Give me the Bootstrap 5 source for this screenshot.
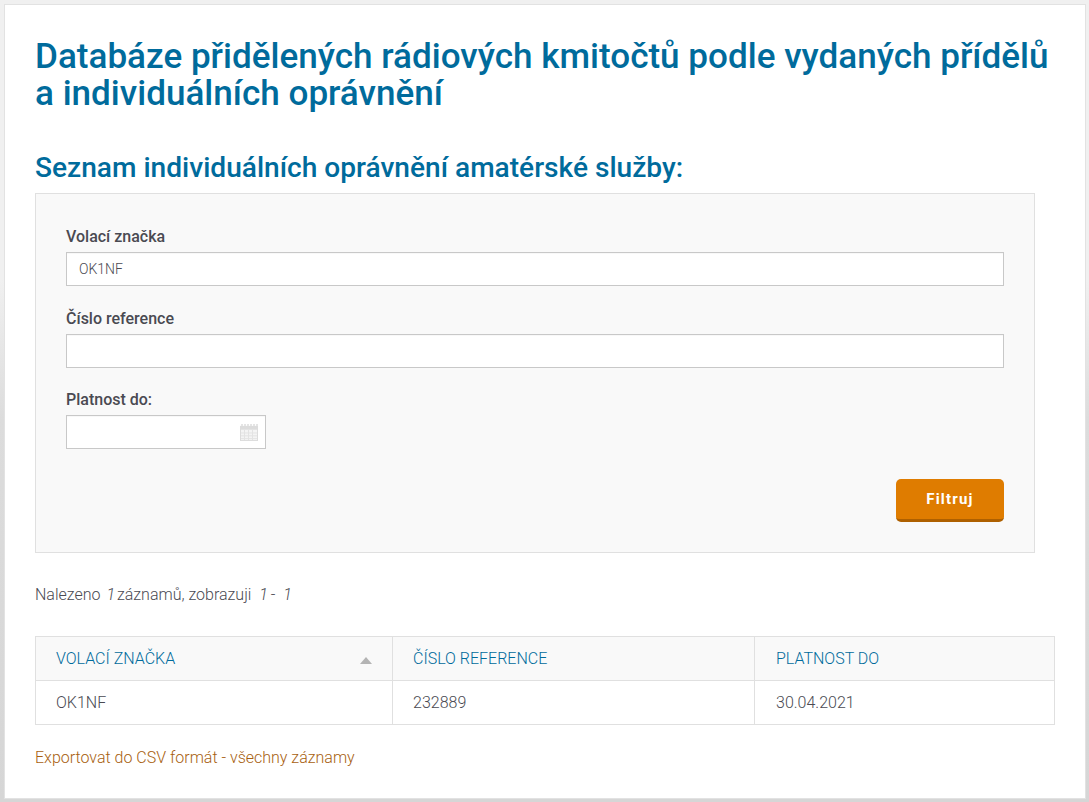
<!DOCTYPE html>
<html lang="cs">
<head>
    <meta charset="UTF-8">
    <meta name="viewport" content="width=device-width, initial-scale=1.0">
    <title>Seznam individuálních oprávnění</title>
    <link href="https://cdn.jsdelivr.net/npm/bootstrap@5.3.0/dist/css/bootstrap.min.css" rel="stylesheet">
    <style>
        html, body {
            height: 802px;
            overflow: hidden;
        }

        body {
            font-family: Roboto, "Liberation Sans", sans-serif;
            font-weight: 300;
            font-size: 16px;
            color: #4a4a52;
            background: linear-gradient(#f0f0f0 0, #f0f0f0 280px, #dcdcdc 420px, #d6d6d6 802px);
            padding: 4px 3px 3px 4px;
        }

        .panel-main {
            background-color: #ffffff;
            border: 1px solid #e2e2e2;
            height: 795px;
            padding: 33px 30px 0 30px;
        }

        .title-main {
            color: #006b9c;
            font-size: 35.1px;
            font-weight: 500;
            line-height: 37px;
            margin: 0 0 40px 0;
        }

        .title-sub {
            color: #006b9c;
            font-size: 28.1px;
            font-weight: 500;
            line-height: 32px;
            margin: 0 0 9px 0;
        }

        .filter-box {
            width: 1000px;
            height: 360px;
            background-color: #f9f9f9;
            border: 1px solid #e0e0e0;
            padding: 31px 30px 30px 30px;
        }

        .filter-label {
            display: block;
            font-size: 16px;
            font-weight: 500;
            line-height: 24px;
            color: #4a4a52;
            margin: 0 0 3px 0;
        }

        .filter-input {
            height: 34px;
            border: 1px solid #c8c8c8;
            border-radius: 0;
            font-size: 14px;
            font-weight: 300;
            color: #4a4a52;
            padding: 0 12px;
            margin-bottom: 21px;
            box-shadow: inset 0 1px 1px rgba(0, 0, 0, 0.03);
        }

        .filter-input-tight {
            margin-bottom: 20px;
        }

        .date-wrap {
            width: 200px;
        }

        .date-icon {
            position: absolute;
            right: 8px;
            top: 9px;
        }

        .btn-filter {
            width: 108px;
            height: 43px;
            background-color: #df7c00;
            border: 0;
            border-bottom: 3px solid #ae6000;
            border-radius: 5px;
            color: #ffffff;
            font-size: 15px;
            font-weight: 700;
            letter-spacing: 1.2px;
            padding: 0;
            margin-top: 9px;
        }

        .btn-filter:hover {
            background-color: #df7c00;
            border-bottom-color: #ae6000;
            color: #ffffff;
        }

        .result-count {
            line-height: 22px;
            margin: 31px 0 30px 0;
        }

        .result-count i {
            margin: 0 -2px 0 2px;
        }

        .result-count i.count-mid {
            margin: 0 -1px 0 4px;
        }

        .result-count i.count-last {
            margin-left: 4px;
        }

        .result-table {
            width: 1020px;
            table-layout: fixed;
            border-collapse: collapse;
            margin-bottom: 21px;
        }

        .result-table th,
        .result-table td {
            height: 44px;
            border: 1px solid #e0e0e0;
            padding: 0 20px;
            font-weight: 300;
            font-size: 16px;
        }

        .result-table th:last-child,
        .result-table td:last-child {
            padding-left: 21px;
        }

        .result-table th {
            background-color: #f9f9f9;
            color: #006b9c;
        }

        .sort-arrow {
            width: 0;
            height: 0;
            border-left: 6.5px solid transparent;
            border-right: 6.5px solid transparent;
            border-bottom: 7px solid #b4b4b4;
            margin-top: 3px;
        }

        .export-link {
            color: #a85f10;
            text-decoration: none;
        }
    </style>
</head>
<body>
    <div class="panel-main">
        <h1 class="title-main">Databáze přidělených rádiových kmitočtů podle vydaných přídělů a individuálních oprávnění</h1>
        <h2 class="title-sub">Seznam individuálních oprávnění amatérské služby:</h2>

        <!-- Filtr -->
        <form class="filter-box">
            <label class="filter-label" for="znacka">Volací značka</label>
            <input type="text" id="znacka" class="form-control filter-input" value="OK1NF">

            <label class="filter-label" for="reference">Číslo reference</label>
            <input type="text" id="reference" class="form-control filter-input filter-input-tight">

            <label class="filter-label" for="platnost">Platnost do:</label>
            <div class="date-wrap position-relative">
                <input type="text" id="platnost" class="form-control filter-input">
                <svg class="date-icon" width="18" height="17" viewBox="0 0 18 18" preserveAspectRatio="none">
                    <rect x="0" y="2" width="18" height="16" fill="#dcdcdc"/>
                    <path d="M2 2V0M5 2V0M8 2V0M11 2V0M14 2V0M17 2V0" stroke="#c8c8c8" stroke-width="1"/>
                    <rect x="1" y="6" width="16" height="11" fill="#f4f4f4"/>
                    <path d="M1 9.5H17M1 12.5H17M1 15.5H17M4.5 6V17M8.5 6V17M12.5 6V17" stroke="#e2e2e2" stroke-width="1"/>
                </svg>
            </div>

            <div class="d-flex justify-content-end">
                <button type="button" class="btn btn-filter">Filtruj</button>
            </div>
        </form>

        <p class="result-count">Nalezeno <i>1</i> záznamů, zobrazuji <i class="count-mid">1</i> - <i class="count-last">1</i></p>

        <!-- Výsledky -->
        <table class="result-table">
            <colgroup>
                <col style="width: 357px">
                <col style="width: 362px">
                <col>
            </colgroup>
            <thead>
                <tr>
                    <th>
                        <div class="d-flex justify-content-between align-items-center">
                            <span>VOLACÍ ZNAČKA</span>
                            <span class="sort-arrow"></span>
                        </div>
                    </th>
                    <th>ČÍSLO REFERENCE</th>
                    <th>PLATNOST DO</th>
                </tr>
            </thead>
            <tbody>
                <tr>
                    <td>OK1NF</td>
                    <td>232889</td>
                    <td>30.04.2021</td>
                </tr>
            </tbody>
        </table>

        <a class="export-link" href="#">Exportovat do CSV formát - všechny záznamy</a>
    </div>

    <script src="https://cdn.jsdelivr.net/npm/bootstrap@5.3.0/dist/js/bootstrap.bundle.min.js"></script>
</body>
</html>
